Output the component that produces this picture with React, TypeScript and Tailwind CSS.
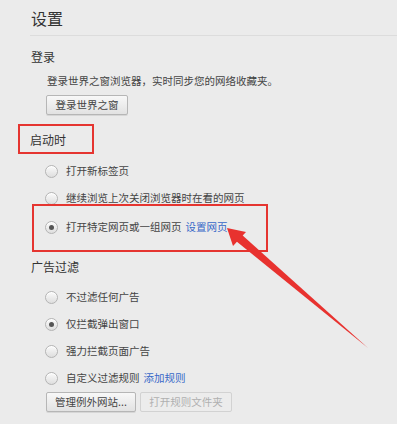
import React from 'react';

const font = { fontFamily: '"Noto Sans CJK SC", "Noto Sans", sans-serif' };

function Radio({ checked = false }: { checked?: boolean }) {
  return (
    <span className="relative flex h-[13px] w-[13px] shrink-0 items-center justify-center rounded-full border border-[#b4b4b4] bg-gradient-to-b from-[#fbfbfb] to-[#dedede] shadow-[inset_0_1px_0_#fff]">
      {checked && <span className="h-[5px] w-[5px] rounded-full bg-[#555]" />}
    </span>
  );
}

function Option({ label, checked, link, className = '' }: { label: string; checked?: boolean; link?: string; className?: string }) {
  return (
    <div className={`flex h-[20px] items-center pl-[15px] ${className}`}>
      <Radio checked={checked} />
      <span className="ml-[8px] text-[10.5px] text-[#444]">{label}</span>
      {link && <span className="ml-[4px] text-[10.5px] text-[#3868c8]">{link}</span>}
    </div>
  );
}

function Button({ children, disabled = false, width }: { children: React.ReactNode; disabled?: boolean; width: string }) {
  return (
    <div
      className={`flex h-[20px] items-center justify-center rounded-[2px] border text-[10.5px] ${width} ${
        disabled
          ? 'border-[#d2d2d2] bg-[#ececec] text-[#b0b0b0]'
          : 'border-[#b6b6b6] bg-gradient-to-b from-[#f8f8f8] to-[#e2e2e2] text-[#444] shadow-[0_1px_0_#d6d6d6]'
      }`}
    >
      {children}
    </div>
  );
}

export default function App() {
  return (
    <div className="relative h-[424px] w-[397px] overflow-hidden bg-[#ebebeb]" style={font}>
      <div className="ml-[30px]">
        {/* Page title */}
        <div className="flex h-[35px] items-center pl-[1px] text-[16px] text-[#333]">设置</div>
        <div className="h-px bg-[#dcdcdc]" />

        {/* Sign in */}
        <div className="mt-[11px] flex h-[20px] items-center pl-[1px] text-[12px] text-[#333]">登录</div>
        <div className="mt-[5px] flex h-[18px] items-center pl-[17px] text-[10.5px] text-[#444]">
          登录世界之窗浏览器，实时同步您的网络收藏夹。
        </div>
        <div className="mt-[5px] pl-[16px]">
          <Button width="w-[82px]">登录世界之窗</Button>
        </div>

        {/* On startup */}
        <div className="mt-[15px] flex h-[20px] items-center text-[12px] text-[#333]">启动时</div>
        <Option className="mt-[11px]" label="打开新标签页" />
        <Option className="mt-[7px]" label="继续浏览上次关闭浏览器时在看的网页" />
        <Option className="mt-[9px]" label="打开特定网页或一组网页" link="设置网页" checked />

        {/* Ad filter */}
        <div className="mt-[20px] flex h-[20px] items-center pl-[1px] text-[12px] text-[#333]">广告过滤</div>
        <Option className="mt-[10px]" label="不过滤任何广告" />
        <Option className="mt-[7px]" label="仅拦截弹出窗口" checked />
        <Option className="mt-[7px]" label="强力拦截页面广告" />
        <Option className="mt-[7px]" label="自定义过滤规则" link="添加规则" />
        <div className="mt-[4px] flex gap-[4px] pl-[16px]">
          <Button width="w-[90px]">管理例外网站...</Button>
          <Button width="w-[92px]" disabled>
            打开规则文件夹
          </Button>
        </div>
      </div>

      {/* Annotations */}
      <div className="pointer-events-none absolute left-[18px] top-[124px] h-[30px] w-[76px] border-2 border-[#e53530]" />
      <div className="pointer-events-none absolute left-[32px] top-[204px] h-[48px] w-[236px] border-2 border-[#e53530]" />
      <svg className="pointer-events-none absolute left-0 top-0" width="397" height="424" viewBox="0 0 397 424">
        <polygon points="227,228 246,232 233,246" fill="#e8322f" />
        <polygon points="236,241 241,234 368,348" fill="#e8322f" />
      </svg>
    </div>
  );
}
